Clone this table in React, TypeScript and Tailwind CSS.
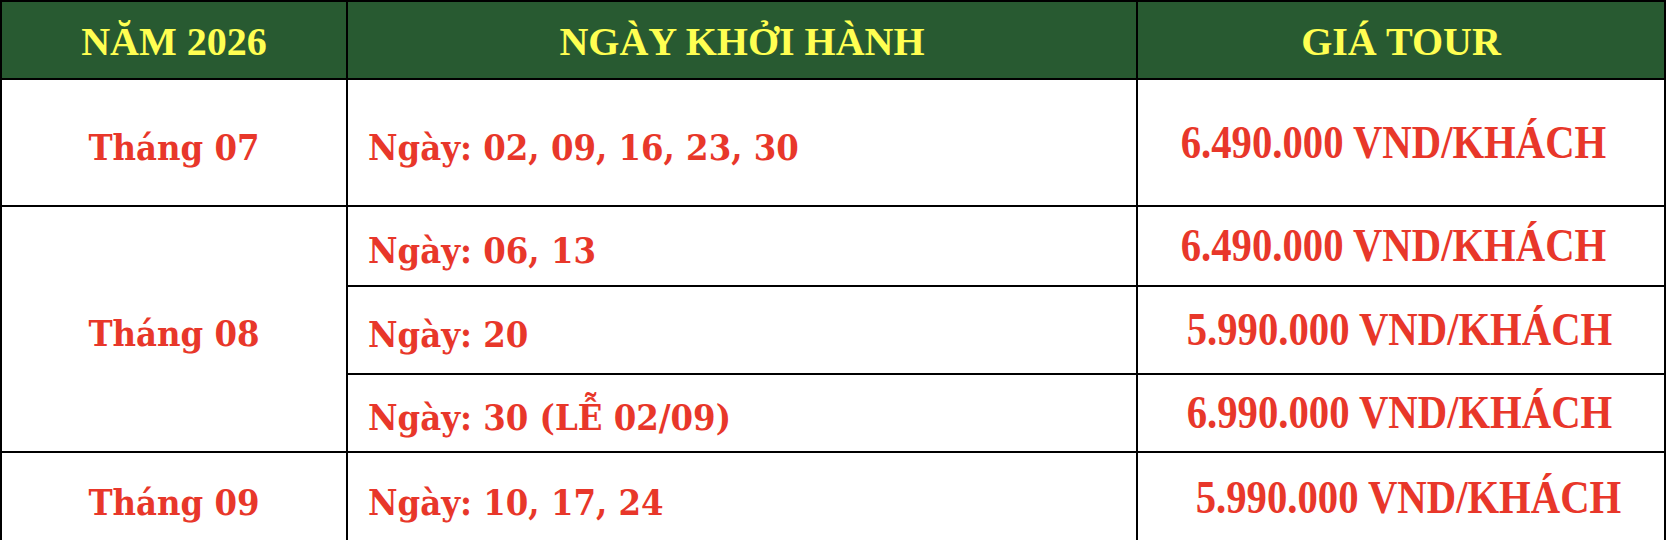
const rows = [
  {
    month: "Tháng 07",
    span: 1,
    height: "h-[127px]",
    date: "Ngày: 02, 09, 16, 23, 30",
    price: "6.490.000 VND/KHÁCH",
    shift: "pr-[16px]",
  },
  {
    month: "Tháng 08",
    span: 3,
    height: "h-[80px]",
    date: "Ngày: 06, 13",
    price: "6.490.000 VND/KHÁCH",
    shift: "pr-[16px]",
  },
  {
    month: null,
    span: 0,
    height: "h-[88px]",
    date: "Ngày: 20",
    price: "5.990.000 VND/KHÁCH",
    shift: "pr-[4px]",
  },
  {
    month: null,
    span: 0,
    height: "h-[78px]",
    date: "Ngày: 30 (LỄ 02/09)",
    price: "6.990.000 VND/KHÁCH",
    shift: "pr-[4px]",
  },
  {
    month: "Tháng 09",
    span: 1,
    height: "h-[92px]",
    date: "Ngày: 10, 17, 24",
    price: "5.990.000 VND/KHÁCH",
    shift: "pl-[14px]",
  },
];

const serif = "font-['DejaVu_Serif_Condensed','DejaVu_Serif',serif] [font-stretch:condensed]";

export default function App() {
  return (
    <div className="w-[1666px] h-[540px] overflow-hidden bg-white">
      <table className="w-[1666px] table-fixed border-collapse">
        <colgroup>
          <col className="w-[346px]" />
          <col className="w-[790px]" />
          <col />
        </colgroup>
        <thead>
          <tr className="h-[78px] bg-[#285a31] text-[40px] font-bold text-[#ffff52] font-['Liberation_Serif',serif]">
            <th className="border-2 border-black pt-[4px] text-center">NĂM 2026</th>
            <th className="border-2 border-black pt-[4px] text-center">NGÀY KHỞI HÀNH</th>
            <th className="border-2 border-black pt-[4px] text-center">GIÁ TOUR</th>
          </tr>
        </thead>
        <tbody className="text-[#e8372a] font-bold">
          {rows.map((row) => (
            <tr key={row.date} className={row.height}>
              {row.month && (
                <td
                  rowSpan={row.span}
                  className={`border-2 border-black pt-[8px] text-center text-[36px] ${serif}`}
                >
                  {row.month}
                </td>
              )}
              <td className={`border-2 border-black pl-[20px] pt-[8px] text-[36px] ${serif}`}>
                {row.date}
              </td>
              <td className={`border-2 border-black text-center ${row.shift}`}>
                <span className="inline-block scale-x-[0.885] whitespace-nowrap text-[46px] leading-none font-['Liberation_Serif',serif]">
                  {row.price}
                </span>
              </td>
            </tr>
          ))}
        </tbody>
      </table>
    </div>
  );
}
